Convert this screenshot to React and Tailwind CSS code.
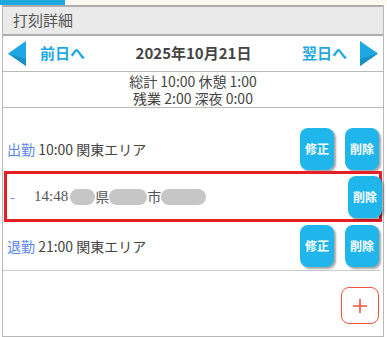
import React from "react";

const jp = { fontFamily: '"Noto Sans CJK JP", "Noto Sans", sans-serif' };

function Btn({ children }) {
  return (
    <div className="w-[34px] h-[42px] rounded-[8px] bg-[#20b6ec] text-white text-[12px] font-bold flex items-center justify-center shadow-[2px_2px_2px_rgba(0,0,0,0.35)]">
      {children}
    </div>
  );
}

function Redact({ w }) {
  return <span className="inline-block h-[16px] rounded-full bg-[#c6c6c6] align-middle" style={{ width: w }} />;
}

export default function App() {
  return (
    <div className="w-[387px] h-[337px] bg-white overflow-hidden text-[#444]" style={jp}>
      <div className="flex h-[5px]">
        <div className="w-[65px] bg-[#1ea6df]" />
        <div className="flex-1 bg-[#fbf9f2]" />
      </div>
      <div className="ml-[2px] w-[382px] h-[332px] border-l border-r border-b border-[#b8b8b8] flex flex-col">
        <div className="h-[31px] bg-[#eaeaea] border-t-[2px] border-b-[2px] border-[#adadad] flex items-center pl-[10px] text-[15px] text-[#555]">
          打刻詳細
        </div>
        <div className="h-[36px] border-b border-[#bbb] flex items-center justify-between px-[5px]">
          <div className="flex items-center gap-[14px]">
            <svg width="18" height="25" viewBox="0 0 18 25">
              <polygon points="0,12.5 18,0 18,25" fill="#1ea7e1" />
              <polygon points="0,12.5 18,25 18,18" fill="#1791c6" />
            </svg>
            <span className="text-[15px] font-bold text-[#1ea7e1]">前日へ</span>
          </div>
          <span className="text-[15px] font-bold text-[#444]">2025年10月21日</span>
          <div className="flex items-center gap-[13px]">
            <span className="text-[15px] font-bold text-[#1ea7e1]">翌日へ</span>
            <svg width="18" height="25" viewBox="0 0 18 25">
              <polygon points="18,12.5 0,0 0,25" fill="#1ea7e1" />
              <polygon points="18,12.5 0,25 0,18" fill="#1791c6" />
            </svg>
          </div>
        </div>
        <div className="h-[36px] border-b border-[#bbb] flex flex-col items-center justify-center text-[14px] leading-[17px] text-[#444]">
          <div className="h-[17px] leading-[17px]">総計 10:00 休憩 1:00</div>
          <div className="h-[17px] leading-[17px]">残業 2:00 深夜 0:00</div>
        </div>
        <div className="h-[63px] flex items-end pb-[1px]">
          <div className="flex-1 flex items-center justify-between pl-[4px] pr-[4px]">
            <div className="text-[14px] text-[#444]">
              <span className="text-[#5a86ec]">出勤</span> 10:00 関東エリア
            </div>
            <div className="flex gap-[11px]">
              <Btn>修正</Btn>
              <Btn>削除</Btn>
            </div>
          </div>
        </div>
        <div className="mx-[1px] w-[378px] h-[51px] border-[3px] border-[#e41f26] flex items-center justify-between pl-[3px] pr-0">
          <div className="flex items-center text-[14px] text-[#555]">
            <span className="text-[#6b8de8] w-[24px]">-</span>
            <span style={{ fontFamily: '"Liberation Serif", serif' }} className="text-[15px] mr-[2px]">14:48</span>
            <Redact w={25} />
            <span>県</span>
            <Redact w={38} />
            <span>市</span>
            <Redact w={45} />
          </div>
          <div className="-mr-[3px]">
            <Btn>削除</Btn>
          </div>
        </div>
        <div className="h-[49px] border-b border-[#ccc] mr-[3px] flex items-center justify-between pl-[4px] pr-[1px]">
          <div className="text-[14px] text-[#444]">
            <span className="text-[#5a86ec]">退勤</span> 21:00 関東エリア
          </div>
          <div className="flex gap-[11px]">
            <Btn>修正</Btn>
            <Btn>削除</Btn>
          </div>
        </div>
        <div className="flex justify-end pr-[4px] pt-[16px]">
          <div className="w-[38px] h-[37px] rounded-[8px] border-[1.5px] border-[#f0553a] flex items-center justify-center">
            <svg width="16" height="16" viewBox="0 0 16 16">
              <path d="M8 1v14M1 8h14" stroke="#f0553a" strokeWidth="1.6" />
            </svg>
          </div>
        </div>
      </div>
    </div>
  );
}
